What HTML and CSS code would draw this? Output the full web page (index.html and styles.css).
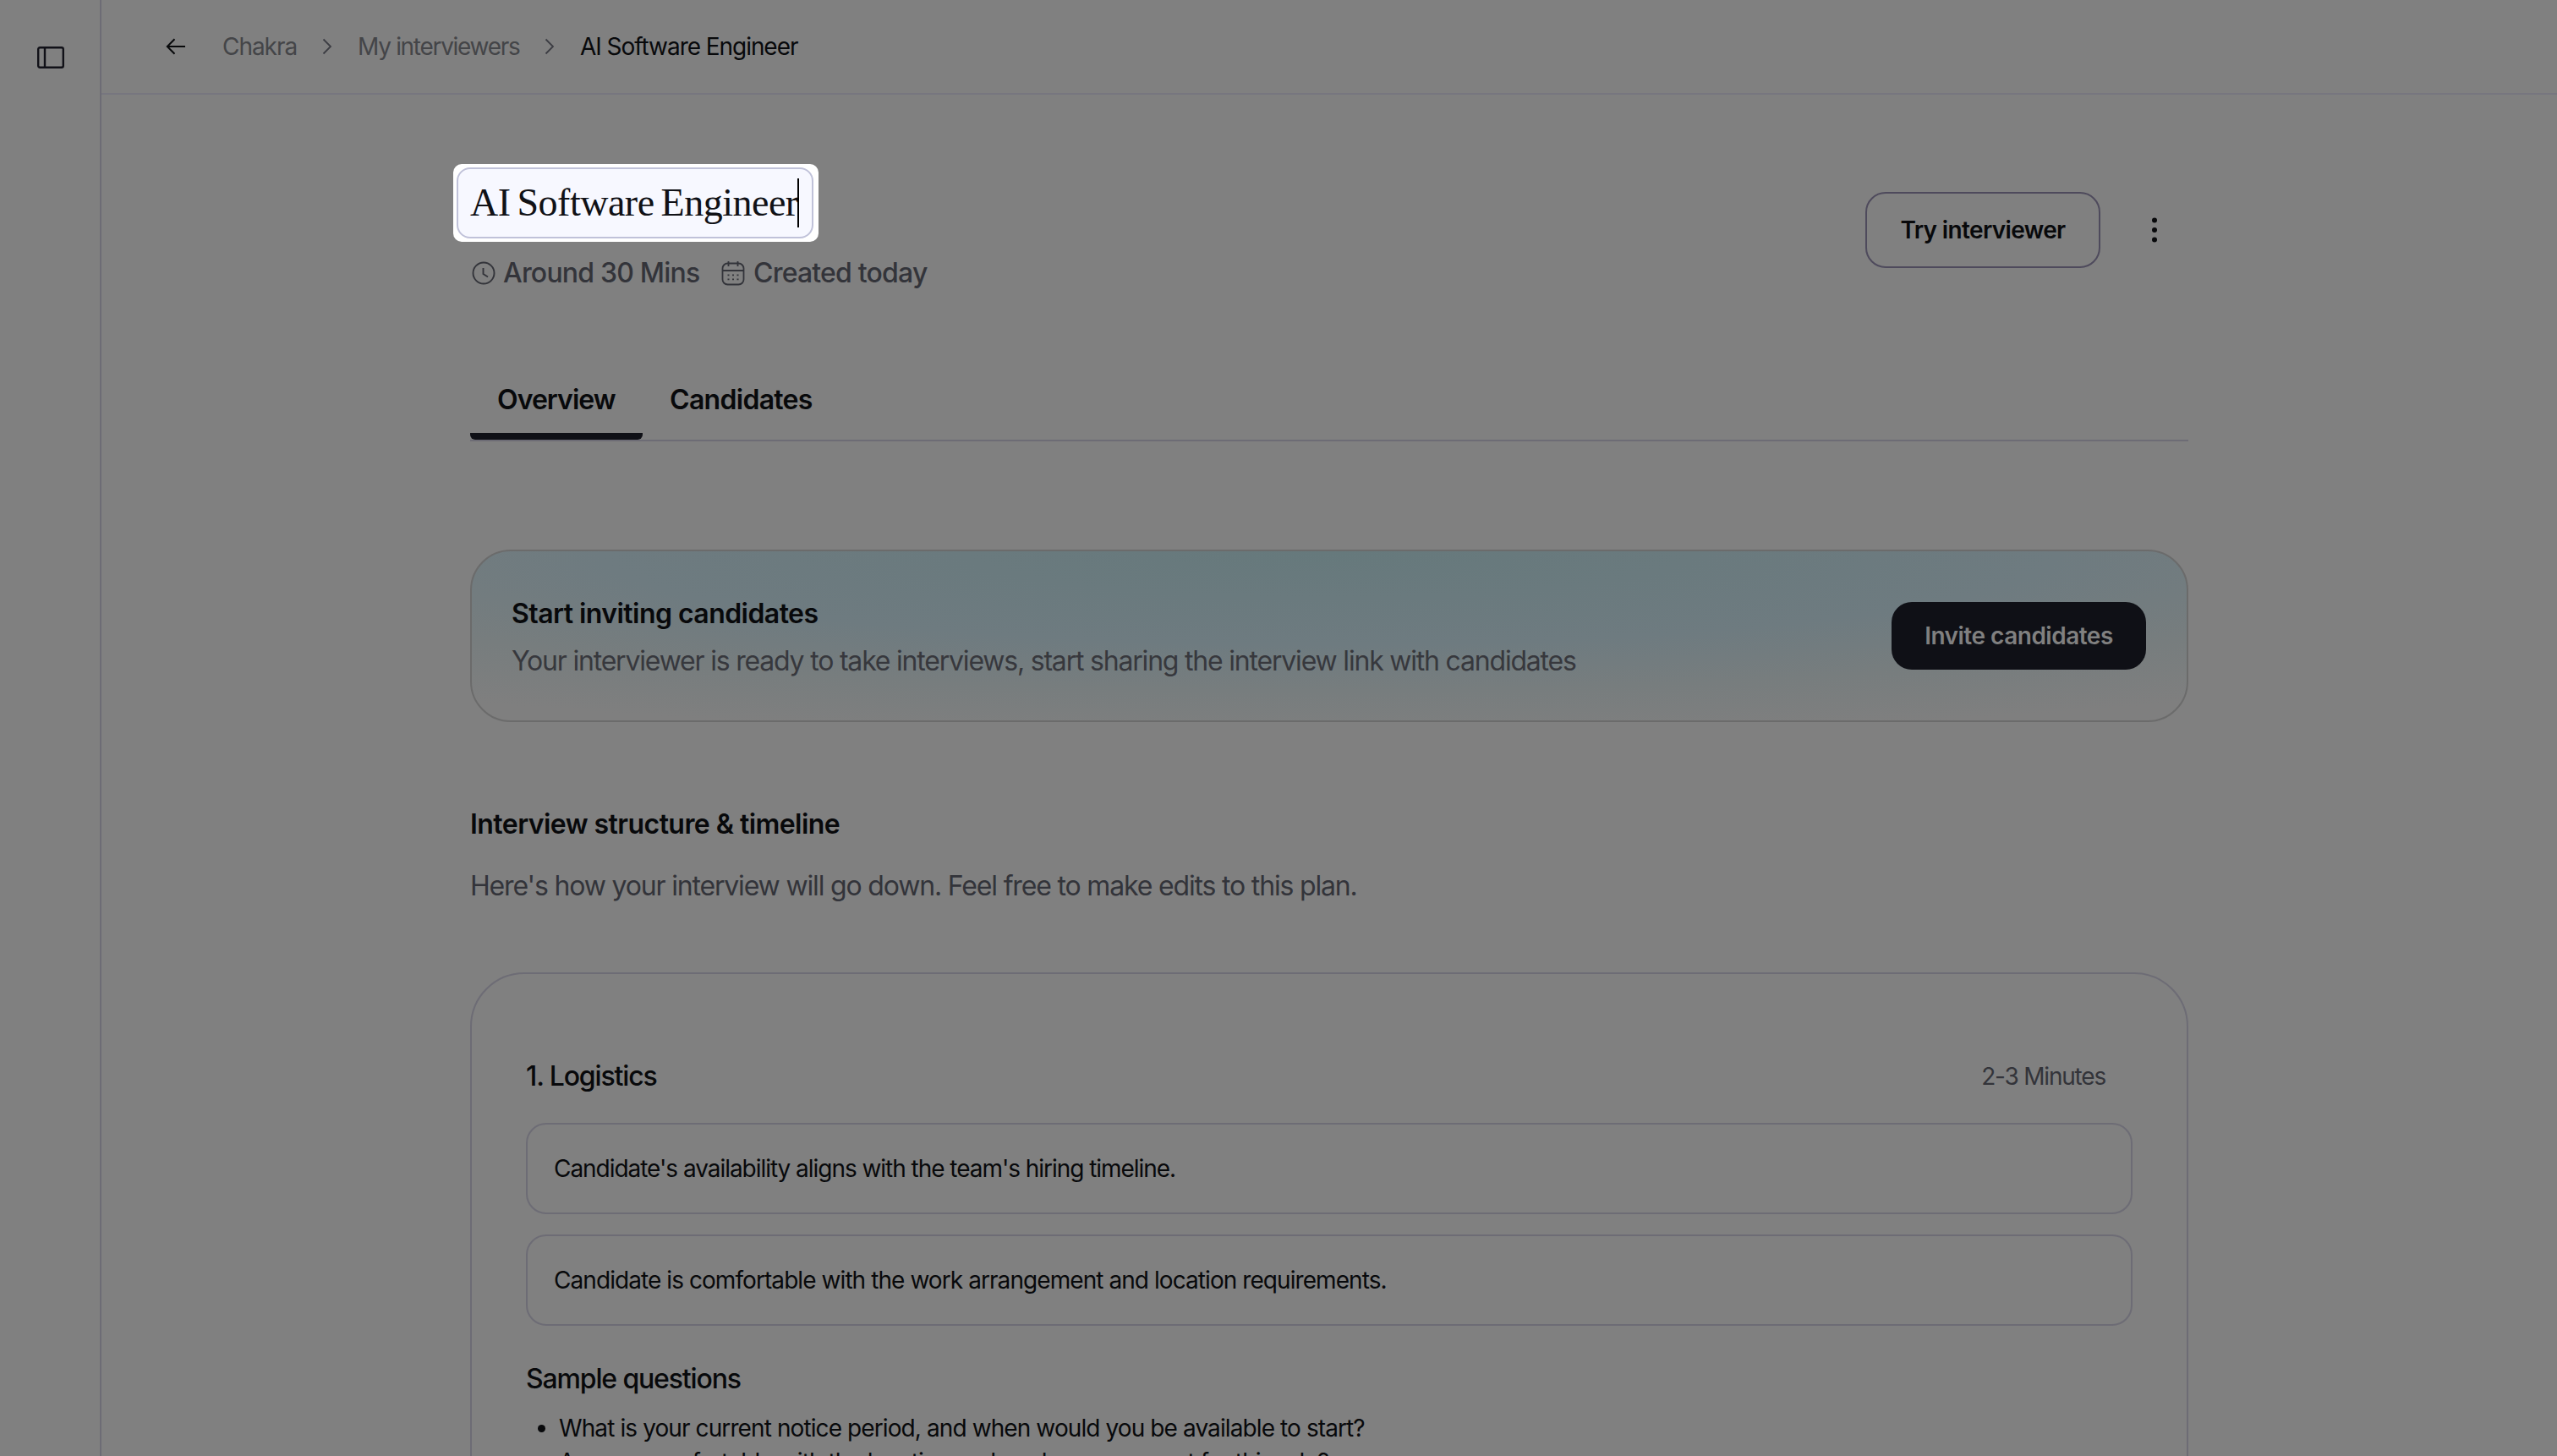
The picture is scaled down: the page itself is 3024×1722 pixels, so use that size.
FILE: index.html
```html
<!doctype html>
<html lang="en">
<head>
<meta charset="UTF-8">
<title>AI Software Engineer</title>
<link rel="stylesheet" href="styles.css">
</head>

<body>
	<aside class="sidebar">
		<svg width="32" height="26" viewBox="0 0 32 26" fill="none" stroke="#111118" stroke-width="2.4">
			<rect x="1.2" y="1.2" width="29.6" height="23.6" rx="2"/>
			<path d="M9 1v24"/>
		</svg>
	</aside>

	<div class="page">
		<header class="topbar">
			<svg class="back" width="24" height="20" viewBox="0 0 24 20" fill="none" stroke="#08090b" stroke-width="2">
				<path d="M23 10H2M10.500 1.200L1.800 10l8.700 8.800"/>
			</svg>
			<span class="crumb crumb-home">Chakra</span>
			<svg class="chevron" width="12" height="20" viewBox="0 0 12 20" fill="none" stroke="#3c3d43" stroke-width="1.800">
				<path d="M1.500 1.500L10 10l-8.500 8.500"/>
			</svg>
			<span class="crumb crumb-list">My interviewers</span>
			<svg class="chevron" width="12" height="20" viewBox="0 0 12 20" fill="none" stroke="#3c3d43" stroke-width="1.800">
				<path d="M1.500 1.500L10 10l-8.500 8.500"/>
			</svg>
			<span class="crumb current">AI Software Engineer</span>
		</header>

		<main class="content">
			<div class="title-row">
				<div class="title-block">
					<div class="spotlight">
						<div class="title-input"><h1>AI Software Engineer</h1><span class="caret"></span></div>
					</div>
					<div class="meta">
						<svg width="28" height="30" viewBox="0 0 28 30" fill="none" stroke="#33343a" stroke-width="1.900">
							<circle cx="14" cy="15" r="12.500"/>
							<path d="M13.500 9v7l5.500 3.500"/>
						</svg>
						<span class="duration">Around 30 Mins</span>
						<svg class="calendar" width="28" height="30" viewBox="0 0 28 30" fill="none" stroke="#33343a" stroke-width="1.800">
							<rect x="1.500" y="3.500" width="25" height="25" rx="6"/>
							<path d="M1.500 12h25M8.500 1v6M19.500 1v6"/>
							<path d="M7.500 17.300h2M13 17.300h2M18.500 17.300h2M7.500 22.300h2M13 22.300h2M18.500 22.300h2"/>
						</svg>
						<span class="created">Created today</span>
					</div>
				</div>
				<div class="actions">
					<button class="try">Try interviewer</button>
					<svg width="8" height="32" viewBox="0 0 8 32" fill="#08090b">
						<circle cx="4" cy="4.500" r="3"/>
						<circle cx="4" cy="16" r="3"/>
						<circle cx="4" cy="27.500" r="3"/>
					</svg>
				</div>
			</div>

			<nav class="tabs">
				<div class="tab active">Overview</div>
				<div class="tab tab-candidates">Candidates</div>
			</nav>

			<section class="banner">
				<div class="banner-copy">
					<h2 class="banner-title">Start inviting candidates</h2>
					<p class="banner-text">Your interviewer is ready to take interviews, start sharing the interview link with candidates</p>
				</div>
				<button class="invite">Invite candidates</button>
			</section>

			<h2 class="plan-title">Interview structure &amp; timeline</h2>
			<p class="plan-text">Here's how your interview will go down. Feel free to make edits to this plan.</p>

			<section class="card">
				<div class="card-head">
					<h3 class="card-title">1. Logistics</h3>
					<span class="minutes">2-3 Minutes</span>
				</div>
				<div class="item item-time">Candidate's availability aligns with the team's hiring timeline.</div>
				<div class="item item-place">Candidate is comfortable with the work arrangement and location requirements.</div>
				<h3 class="sample-title">Sample questions</h3>
				<ul class="questions">
					<li>What is your current notice period, and when would you be available to start?</li>
					<li>Are you comfortable with the location and work arrangement for this role?</li>
				</ul>
			</section>
		</main>
	</div>
</body>
</html>
```
FILE: styles.css
```css
*{
	box-sizing: border-box;
	margin: 0;
	padding: 0;
}
body {
	display: flex;
	height: 1722px;
	overflow: hidden;
	background-color: #808080;
	color: #08090b;
	font-family: Inter, "Liberation Sans", sans-serif;
	font-size: 32px;
	line-height: 40px;
	white-space: nowrap;
}
svg {
	display: block;
	flex-shrink: 0;
}
h2, h3 {
	font-size: 32px;
}

.sidebar {
	width: 120px;
	flex-shrink: 0;
	padding: 55px 0 0 44px;
	border-right: 2px solid #6d6c75;
}
.page {
	flex: 1;
}

.topbar {
	display: flex;
	align-items: center;
	height: 112px;
	padding-left: 76px;
	border-bottom: 2px solid #77767f;
	font-size: 28px;
	letter-spacing: -1.05px;
}
.crumb {
	color: #444548;
}
.crumb-home {
	width: 88px;
	margin: 0 30px 0 43px;
}
.crumb-list {
	width: 190px;
	margin: 0 31px 0 30px;
	letter-spacing: -1.3px;
}
.current {
	margin-left: 30px;
	color: #08090b;
}

.content {
	width: 2032px;
	margin-left: 436px;
	padding-top: 82px;
}
.title-row {
	display: flex;
	justify-content: space-between;
}
.spotlight {
	width: 432px;
	height: 92px;
	margin-left: -20px;
	padding: 4px 6px 4px 4px;
	border-radius: 10px;
	background-color: white;
}
.title-input {
	display: flex;
	align-items: center;
	height: 84px;
	padding-left: 14px;
	border: 2px solid #c0c2d9;
	border-radius: 16px;
	background-color: #f7f8ff;
}
.title-input h1 {
	width: 387px;
	font-family: "Liberation Serif", serif;
	font-size: 46px;
	font-weight: normal;
	letter-spacing: -0.5px;
	word-spacing: -3px;
	color: #101116;
}
.caret {
	width: 2px;
	height: 58px;
	background-color: black;
}
.meta {
	display: flex;
	align-items: center;
	margin-top: 16px;
	padding-left: 2px;
	color: #33343a;
	font-weight: 500;
	letter-spacing: -0.8px;
}
.meta span {
	padding-top: 1px;
}
.duration {
	width: 231px;
	margin-left: 9px;
}
.calendar {
	margin: 0 10px 0 27px;
}
.actions {
	display: flex;
	align-items: center;
	height: 90px;
	margin-top: 33px;
	padding-right: 36px;
}
button {
	border: none;
	border-radius: 24px;
	font-family: inherit;
	font-size: 28px;
	font-weight: 600;
}
.try {
	width: 278px;
	height: 90px;
	margin-right: 60px;
	border: 2px solid #4e4a5c;
	background: none;
	color: #08090b;
	letter-spacing: -0.65px;
}

.tabs {
	display: flex;
	margin-top: 110px;
	border-bottom: 2px solid #6d6c75;
	font-weight: 600;
}
.tab {
	height: 67px;
	padding-left: 32px;
	letter-spacing: -0.7px;
}
.active {
	width: 204px;
	background: linear-gradient(#0f1016, #0f1016) bottom / 100% 8px no-repeat;
	border-radius: 6px;
	letter-spacing: -0.95px;
}

.banner {
	display: flex;
	align-items: center;
	justify-content: space-between;
	height: 204px;
	margin-top: 128px;
	padding: 0 48px 0 47px;
	border: 2px solid #6b6b6b;
	border-radius: 48px;
	background: radial-gradient(ellipse 85% 110% at 50% 0, #66797c, #6e7b80 50%, #777d7e 75%, #7f7f7f);
	line-height: 56px;
}
.banner-copy {
	padding-top: 3px;
}
.banner-title, .plan-title {
	font-weight: 600;
	letter-spacing: -0.55px;
}
.banner-text {
	color: #37383d;
	letter-spacing: -1.2px;
}
.invite {
	width: 301px;
	height: 80px;
	background-color: #0f1016;
	color: #808080;
	letter-spacing: -0.5px;
}

.plan-title {
	margin-top: 101px;
}
.plan-text {
	margin: 33px 0 82px;
	color: #33343a;
	letter-spacing: -1.17px;
}

.card {
	height: 700px;
	padding: 101px 64px 0;
	border: 2px solid #6d6c75;
	border-radius: 64px;
}
.card-head {
	display: flex;
	justify-content: space-between;
	margin-bottom: 35px;
	padding-right: 32px;
}
.card h3 {
	font-weight: 500;
	letter-spacing: -1.15px;
}
.minutes {
	font-size: 28px;
	color: #33343a;
	letter-spacing: -1.2px;
}
.item {
	height: 108px;
	margin-bottom: 24px;
	padding-left: 31px;
	border: 2px solid #6d6c75;
	border-radius: 24px;
	font-size: 28px;
	line-height: 104px;
}
.item-time {
	letter-spacing: -1.04px;
}
.item-place {
	letter-spacing: -0.93px;
}
.sample-title {
	margin-top: 43px;
}
.questions {
	margin-top: 18px;
	padding-left: 39px;
	font-size: 28px;
	letter-spacing: -0.9px;
}
```
